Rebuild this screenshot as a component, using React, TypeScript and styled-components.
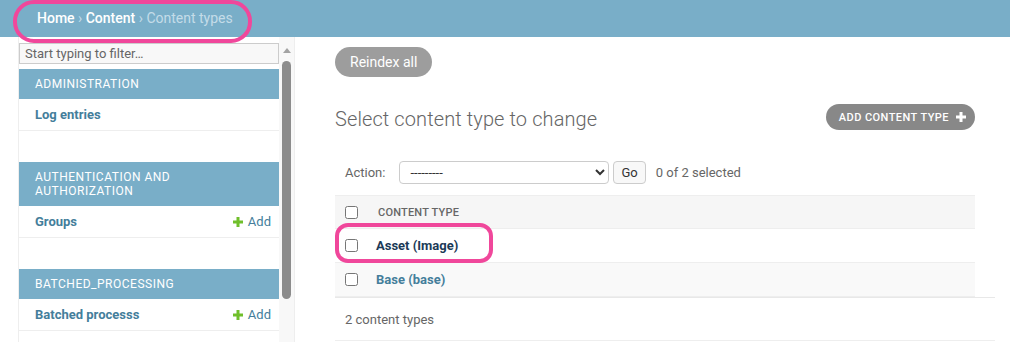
import React from "react";
import styled, { createGlobalStyle } from "styled-components";

const GlobalStyle = createGlobalStyle`
  html, body {
    margin: 0;
    height: 100%;
    overflow: hidden;
    background: #fff;
  }
  body {
    font-family: Roboto, "Liberation Sans", sans-serif;
    color: #333;
    font-size: 14px;
  }
  * { box-sizing: border-box; }
`;

const Page = styled.div`
  position: relative;
  height: 100vh;
  display: flex;
  flex-direction: column;
`;

const Breadcrumbs = styled.div`
  background: #79aec8;
  color: #c4dce8;
  font-size: 14px;
  line-height: 17px;
  padding: 10px 37px;
  a {
    color: #fff;
    font-weight: 500;
    text-decoration: none;
  }
`;

const Main = styled.div`
  flex: 1;
  display: flex;
  min-height: 0;
`;

const ToggleStrip = styled.div`
  flex: 0 0 19px;
  border-right: 1px solid #eee;
`;

const Sidebar = styled.nav`
  flex: 0 0 276px;
  display: flex;
  border-right: 1px solid #eee;
  overflow: hidden;
`;

const SidebarBody = styled.div`
  flex: 1;
  min-width: 0;
`;

const FilterInput = styled.input`
  display: block;
  width: 100%;
  height: 21px;
  margin: 6px 0 5px;
  padding: 2px 5px;
  border: 1px solid #ccc;
  background: #f8f8f8;
  font: 13px Roboto, "Liberation Sans", sans-serif;
  color: #333;
  &::placeholder { color: #666; }
`;

const ScrollTrack = styled.div`
  flex: 0 0 15px;
  background: #f8f8f8;
  display: flex;
  flex-direction: column;
  align-items: center;
`;

const ScrollArrow = styled.div`
  margin-top: 11px;
  width: 0;
  height: 0;
  border-left: 4px solid transparent;
  border-right: 4px solid transparent;
  border-bottom: 5px solid #a3a3a3;
`;

const ScrollThumb = styled.div`
  margin-top: 8px;
  width: 9px;
  height: 238px;
  border-radius: 5px;
  background: #8c8c8c;
`;

const Module = styled.div`
  margin-bottom: 31px;
`;

const Caption = styled.div`
  background: #79aec8;
  color: #fff;
  font-size: 12px;
  line-height: 14px;
  letter-spacing: 0.5px;
  text-transform: uppercase;
  padding: 8px 8px 8px 16px;
`;

const NavRow = styled.div`
  display: flex;
  align-items: center;
  justify-content: space-between;
  height: 32px;
  padding: 0 8px 0 16px;
  border-bottom: 1px solid #eee;
  font-size: 13px;
`;

const NavLink = styled.a`
  color: #447e9b;
  font-weight: 700;
  text-decoration: none;
`;

const AddLink = styled.a`
  display: flex;
  align-items: center;
  gap: 5px;
  color: #447e9b;
  text-decoration: none;
`;

const Content = styled.main`
  flex: 1;
  min-width: 0;
  padding: 10px 15px 0 40px;
`;

const PillButton = styled.button<{ $tone: string }>`
  display: inline-flex;
  align-items: center;
  border: 0;
  border-radius: 15px;
  background: ${(p) => p.$tone};
  color: #fff;
  font-family: Roboto, "Liberation Sans", sans-serif;
  cursor: pointer;
`;

const ReindexButton = styled(PillButton)`
  height: 30px;
  padding: 0 15px;
  font-size: 14px;
`;

const TitleRow = styled.div`
  width: 640px;
  height: 26px;
  margin-top: 27px;
  display: flex;
  align-items: flex-start;
  justify-content: space-between;
`;

const Title = styled.h1`
  margin: 2px 0 0;
  font-size: 20px;
  line-height: 26px;
  font-weight: 300;
  letter-spacing: 0.1px;
  color: #666;
`;

const AddButton = styled(PillButton)`
  height: 26px;
  padding: 0 9px 0 13px;
  gap: 7px;
  font-size: 11px;
  font-weight: 500;
  letter-spacing: 0.45px;
  text-transform: uppercase;
`;

const Actions = styled.div`
  margin-top: 31px;
  height: 23px;
  display: flex;
  align-items: center;
  padding-left: 10px;
  font-size: 13px;
  color: #666;
`;

const ActionLabel = styled.label`
  margin-right: 14px;
`;

const ActionSelect = styled.select`
  width: 210px;
  height: 23px;
  padding: 0 6px;
  border: 1px solid #ccc;
  border-radius: 4px;
  background: #fff;
  color: #333;
  font: 13px Roboto, "Liberation Sans", sans-serif;
`;

const GoButton = styled.button`
  height: 23px;
  margin: 0 10px 0 4px;
  padding: 0 7px;
  border: 1px solid #ccc;
  border-radius: 4px;
  background: #f8f8f8;
  color: #333;
  font: 13px Roboto, "Liberation Sans", sans-serif;
`;

const Results = styled.div`
  margin-top: 11px;
  width: 640px;
`;

const ResultRow = styled.div<{ $head?: boolean; $alt?: boolean }>`
  display: flex;
  align-items: center;
  height: 34px;
  border-top: ${(p) => (p.$head ? "1px solid #eee" : "0")};
  border-bottom: 1px solid #eee;
  background: ${(p) => (p.$head ? "#f6f6f6" : p.$alt ? "#f9f9f9" : "#fff")};
`;

const Check = styled.input`
  width: 13px;
  height: 13px;
  margin: 0 18px 0 10px;
`;

const HeadLabel = styled.span`
  padding-left: 2px;
  font-size: 11px;
  font-weight: 500;
  letter-spacing: 0.2px;
  text-transform: uppercase;
  color: #666;
`;

const RowLink = styled.a<{ $active?: boolean }>`
  font-size: 13px;
  font-weight: 700;
  color: ${(p) => (p.$active ? "#1b3a57" : "#447e9b")};
  text-decoration: none;
`;

const Paginator = styled.div`
  width: 660px;
  height: 44px;
  display: flex;
  align-items: center;
  padding-left: 10px;
  border-top: 1px solid #e8e8e8;
  border-bottom: 1px solid #eee;
  font-size: 13px;
  color: #666;
`;

const Annotation = styled.div<{ $radius: number }>`
  position: absolute;
  border: 4px solid #f0479b;
  border-radius: ${(p) => p.$radius}px;
  pointer-events: none;
`;

const PlusIcon = ({ color }: { color: string }) => (
  <svg width="10" height="10" viewBox="0 0 10 10">
    <rect x="3.5" y="0" width="3" height="10" fill={color} />
    <rect x="0" y="3.5" width="10" height="3" fill={color} />
  </svg>
);

const modules = [
  { name: "Administration", rows: [{ label: "Log entries", add: false }] },
  { name: "Authentication and Authorization", rows: [{ label: "Groups", add: true }] },
  { name: "Batched_processing", rows: [{ label: "Batched processs", add: true }] },
];

export default function App() {
  return (
    <Page>
      <GlobalStyle />
      <Breadcrumbs>
        <a href="#">Home</a> › <a href="#">Content</a> › Content types
      </Breadcrumbs>
      <Main>
        <ToggleStrip />
        <Sidebar>
          <SidebarBody>
            <FilterInput placeholder="Start typing to filter…" />
            {modules.map((m) => (
              <Module key={m.name}>
                <Caption>{m.name}</Caption>
                {m.rows.map((r) => (
                  <NavRow key={r.label}>
                    <NavLink href="#">{r.label}</NavLink>
                    {r.add && (
                      <AddLink href="#">
                        <PlusIcon color="#70bf2b" />
                        Add
                      </AddLink>
                    )}
                  </NavRow>
                ))}
              </Module>
            ))}
          </SidebarBody>
          <ScrollTrack>
            <ScrollArrow />
            <ScrollThumb />
          </ScrollTrack>
        </Sidebar>
        <Content>
          <ReindexButton $tone="#9d9d9d">Reindex all</ReindexButton>
          <TitleRow>
            <Title>Select content type to change</Title>
            <AddButton $tone="#888">
              Add content type
              <PlusIcon color="#fff" />
            </AddButton>
          </TitleRow>
          <Actions>
            <ActionLabel>Action:</ActionLabel>
            <ActionSelect defaultValue="">
              <option value="">---------</option>
            </ActionSelect>
            <GoButton>Go</GoButton>
            0 of 2 selected
          </Actions>
          <Results>
            <ResultRow $head>
              <Check type="checkbox" />
              <HeadLabel>Content type</HeadLabel>
            </ResultRow>
            <ResultRow>
              <Check type="checkbox" />
              <RowLink href="#" $active>Asset (Image)</RowLink>
            </ResultRow>
            <ResultRow $alt>
              <Check type="checkbox" />
              <RowLink href="#">Base (base)</RowLink>
            </ResultRow>
          </Results>
          <Paginator>2 content types</Paginator>
        </Content>
      </Main>
      <Annotation $radius={21} style={{ left: 13, top: 0, width: 239, height: 43 }} />
      <Annotation $radius={13} style={{ left: 335, top: 223, width: 158, height: 40 }} />
    </Page>
  );
}
